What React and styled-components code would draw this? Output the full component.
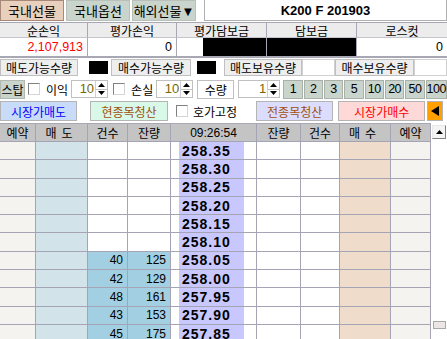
import React from "react";
import styled, { createGlobalStyle } from "styled-components";

const GlobalStyle = createGlobalStyle`
  body {
    margin: 0;
    background: #fff;
    font-family: "Liberation Sans", "Noto Sans CJK KR", sans-serif;
    font-size: 12px;
    color: #000;
    overflow: hidden;
  }
`;

const Page = styled.div`
  width: 447px;
  height: 339px;
  overflow: hidden;
  display: flex;
  flex-direction: column;
`;

const TopBar = styled.div`
  display: flex;
  gap: 2px;
  height: 21px;
  margin-bottom: 1px;
`;

const Tab = styled.div`
  width: 64px;
  box-sizing: border-box;
  display: flex;
  align-items: center;
  justify-content: center;
  font-size: 13px;
  background: ${(p) => (p.$active ? "#e8d0bc" : "#c8d4cc")};
  border: 1px solid ${(p) => (p.$active ? "#a88878" : "#b8c0b8")};
`;

const TitleBox = styled.div`
  flex: 1;
  margin-left: 6px;
  display: flex;
  align-items: center;
  justify-content: center;
  font-weight: bold;
  font-size: 13px;
  border: 1px solid #b0b0b0;
  border-top: none;
`;

const Summary = styled.div`
  display: grid;
  grid-template-columns: 88px 89px 90px 90px 1fr;
  grid-template-rows: 15px 18px;
  border-top: 1px solid #a8a8b4;
  border-bottom: 2px solid #a8a8b4;
`;

const SumHead = styled.div`
  background: #ececec;
  border-right: 1px solid #a8a8b4;
  border-bottom: 1px solid #c4c4cc;
  display: flex;
  align-items: center;
  justify-content: center;
  &:nth-child(5) {
    border-right: none;
  }
`;

const SumValue = styled.div`
  display: flex;
  align-items: center;
  justify-content: flex-end;
  padding-right: 4px;
  border-right: ${(p) => (p.$last ? "none" : "1px solid #a8a8b4")};
  color: ${(p) => (p.$red ? "#ff0000" : "#000")};
  font-size: 12.5px;
  background: ${(p) => (p.$dark ? "#000" : "#fff")};
`;

const Blackout = styled.div`
  align-self: stretch;
  width: 63px;
  margin-right: -4px;
  background: #000;
`;

const QtyRow = styled.div`
  display: grid;
  grid-template-columns: 78px 33px 80px 33px 78px 33px 79px 1fr;
  height: 19px;
  align-items: center;
`;

const QtyLabel = styled.div`
  height: 17px;
  box-sizing: border-box;
  display: flex;
  align-items: center;
  justify-content: center;
  background: #eeeeee;
  border: 1px solid #c0c0c0;
`;

const QtyBox = styled.div`
  height: 17px;
  box-sizing: border-box;
  background: #fff;
  border: 1px solid #d0d0d0;
`;

const BlackBox = styled.div`
  height: 13px;
  width: 19px;
  margin-left: ${(p) => p.$ml}px;
  background: #000;
`;

const Line = styled.div`
  display: flex;
  align-items: center;
  height: 20px;
  margin-top: 2px;
`;

const GreyBtn = styled.div`
  width: ${(p) => p.$w}px;
  height: 19px;
  box-sizing: border-box;
  display: flex;
  align-items: center;
  justify-content: center;
  font-size: 12px;
  white-space: nowrap;
  flex-shrink: 0;
  background: ${(p) => (p.$plain ? "#fff" : "#c8d4cc")};
  border: 1px solid ${(p) => (p.$plain ? "#c0c0c0" : "#b0b8b0")};
  margin-left: ${(p) => p.$ml || 0}px;
`;

const NumBtns = styled.div`
  flex: 1;
  display: flex;
  gap: 1px;
  margin-left: 3px;
`;

const NumBtn = styled.div`
  flex: 1;
  height: 19px;
  box-sizing: border-box;
  display: flex;
  align-items: center;
  justify-content: center;
  font-size: 12.5px;
  background: #c8d4cc;
  border: 1px solid #a8b0a8;
  letter-spacing: -0.5px;
`;

const Check = styled.span`
  display: block;
  width: 12px;
  height: 12px;
  box-sizing: border-box;
  background: #fff;
  border-top: 1px solid #808080;
  border-left: 1px solid #808080;
  border-right: 1px solid #d4d4d4;
  border-bottom: 1px solid #d4d4d4;
  margin-left: ${(p) => p.$ml || 0}px;
  flex-shrink: 0;
`;

const Text = styled.span`
  margin-left: ${(p) => p.$ml || 0}px;
  font-size: 12px;
  white-space: nowrap;
`;

const Spin = styled.div`
  display: flex;
  width: ${(p) => p.$w}px;
  height: 18px;
  box-sizing: border-box;
  margin-left: ${(p) => p.$ml || 0}px;
  border: 1px solid #c0c0c0;
  background: #fff;
  flex-shrink: 0;
`;

const SpinValue = styled.span`
  flex: 1;
  text-align: right;
  color: #7a6600;
  font-size: 13px;
  line-height: 16px;
  padding-right: 1px;
`;

const SpinArrows = styled.div`
  width: 11px;
  display: flex;
  flex-direction: column;
  border-left: 1px solid #d0d0d0;
`;

const SpinArrow = styled.div`
  flex: 1;
  display: flex;
  align-items: center;
  justify-content: center;
  & + & {
    border-top: 1px solid #c0c0c0;
  }
`;

const ActionBtn = styled.div`
  width: ${(p) => p.$w}px;
  height: 20px;
  box-sizing: border-box;
  margin-left: ${(p) => p.$ml || 0}px;
  display: flex;
  align-items: center;
  justify-content: center;
  font-size: 12px;
  background: ${(p) => p.$bg};
  color: ${(p) => p.$color};
  border: 1px solid #b4b4b4;
  flex-shrink: 0;
`;

const Board = styled.div`
  display: flex;
  margin-top: 2px;
  flex: 1;
  min-height: 0;
`;

const Table = styled.div`
  width: 431px;
  display: grid;
  grid-template-columns: 36px 52px 40px 43px 86px 44px 39px 51px 40px;
  grid-template-rows: 18px;
  grid-auto-rows: 18.3px;
  border-top: 1px solid #a8a8b4;
  align-content: start;
`;

const HeadCell = styled.div`
  box-sizing: border-box;
  background: #c4c4c4;
  border-right: 1px solid #a4a4b4;
  border-bottom: 1px solid #a4a4b4;
  display: flex;
  align-items: center;
  justify-content: center;
  letter-spacing: ${(p) => p.$ls || 0}px;
  font-size: 12px;
`;

const Cell = styled.div`
  box-sizing: border-box;
  background: ${(p) => p.$bg || "#fff"};
  border-right: 1px solid #a4a4b4;
  border-bottom: 1px solid #a4a4b4;
  display: flex;
  align-items: center;
  justify-content: flex-end;
  padding-right: 4px;
  font-size: 12px;
`;

const PriceCell = styled.div`
  box-sizing: border-box;
  border-right: 1px solid #a4a4b4;
  border-bottom: 1px solid #a4a4b4;
  padding: 0 12px 0 8px;
  display: flex;
`;

const Price = styled.div`
  flex: 1;
  background: #c8c8ff;
  display: flex;
  align-items: center;
  padding-left: 3px;
  font-weight: bold;
  font-size: 14px;
  letter-spacing: 1px;
`;

const Scrollbar = styled.div`
  flex: 1;
  display: flex;
  flex-direction: column;
  align-items: center;
  padding-top: 2px;
`;

const ScrollBtn = styled.div`
  width: 14px;
  height: 14px;
  box-sizing: border-box;
  background: #f4f4f4;
  border-top: 1px solid #e8e8e8;
  border-left: 1px solid #e8e8e8;
  border-right: 1px solid #808080;
  border-bottom: 1px solid #808080;
  display: flex;
  align-items: center;
  justify-content: center;
`;

const Thumb = styled.div`
  width: 13px;
  height: 8px;
  box-sizing: border-box;
  margin-top: auto;
  margin-bottom: 10px;
  background: #ece6e6;
  border: 1px solid #a8a8a8;
`;

const Tri = ({ dir = "up", w = 7, h = 4 }) => {
  const pts = {
    up: `0,${h} ${w / 2},0 ${w},${h}`,
    down: `0,0 ${w},0 ${w / 2},${h}`,
    left: `${w},0 ${w},${h} 0,${h / 2}`,
  }[dir];
  return (
    <svg width={w} height={h} viewBox={`0 0 ${w} ${h}`} style={{ display: "block" }}>
      <polygon points={pts} fill="#000" />
    </svg>
  );
};

const Spinner = ({ value, w, ml }) => (
  <Spin $w={w} $ml={ml}>
    <SpinValue>{value}</SpinValue>
    <SpinArrows>
      <SpinArrow>
        <Tri dir="up" />
      </SpinArrow>
      <SpinArrow>
        <Tri dir="down" />
      </SpinArrow>
    </SpinArrows>
  </Spin>
);

const COLORS = {
  resv: "#f5f3f0",
  sell: "#d2e4ea",
  sellFill: "#a2cfe2",
  buy: "#f0dccb",
};

const rows = [
  { price: "258.35" },
  { price: "258.30" },
  { price: "258.25" },
  { price: "258.20" },
  { price: "258.15" },
  { price: "258.10" },
  { price: "258.05", cnt: 40, qty: 125 },
  { price: "258.00", cnt: 42, qty: 129 },
  { price: "257.95", cnt: 48, qty: 161 },
  { price: "257.90", cnt: 43, qty: 153 },
  { price: "257.85", cnt: 45, qty: 175 },
];

const App = () => {
  return (
    <Page>
      <GlobalStyle />
      <TopBar>
        <Tab $active>국내선물</Tab>
        <Tab>국내옵션</Tab>
        <Tab>해외선물▼</Tab>
        <TitleBox>K200 F 201903</TitleBox>
      </TopBar>

      <Summary>
        <SumHead>순손익</SumHead>
        <SumHead>평가손익</SumHead>
        <SumHead>평가담보금</SumHead>
        <SumHead>담보금</SumHead>
        <SumHead>로스컷</SumHead>
        <SumValue $red>2,107,913</SumValue>
        <SumValue>0</SumValue>
        <SumValue>
          <Blackout />
        </SumValue>
        <SumValue $dark />
        <SumValue $last>0</SumValue>
      </Summary>

      <QtyRow>
        <QtyLabel>매도가능수량</QtyLabel>
        <BlackBox $ml={11} />
        <QtyLabel>매수가능수량</QtyLabel>
        <BlackBox $ml={6} />
        <QtyLabel>매도보유수량</QtyLabel>
        <QtyBox />
        <QtyLabel>매수보유수량</QtyLabel>
        <QtyBox />
      </QtyRow>

      <Line>
        <GreyBtn $w={25}>스탑</GreyBtn>
        <Check $ml={3} />
        <Text $ml={6}>이익</Text>
        <Spinner value="10" w={37} ml={3} />
        <Check $ml={5} />
        <Text $ml={6}>손실</Text>
        <Spinner value="10" w={37} ml={3} />
        <GreyBtn $w={37} $ml={4} $plain>
          수량
        </GreyBtn>
        <Spinner value="1" w={42} ml={4} />
        <NumBtns>
          {["1", "2", "3", "5", "10", "20", "50", "100"].map((n) => (
            <NumBtn key={n}>{n}</NumBtn>
          ))}
        </NumBtns>
      </Line>

      <Line>
        <ActionBtn $w={77} $bg="#c8dcfa" $color="#0000ff">
          시장가매도
        </ActionBtn>
        <ActionBtn $w={78} $ml={13} $bg="#d8f8e8" $color="#a05010">
          현종목청산
        </ActionBtn>
        <Check $ml={8} />
        <Text $ml={5}>호가고정</Text>
        <ActionBtn $w={77} $ml={19} $bg="#dcdcfc" $color="#a05010">
          전종목청산
        </ActionBtn>
        <ActionBtn $w={87} $ml={5} $bg="#ffd8d8" $color="#ff0000">
          시장가매수
        </ActionBtn>
        <ActionBtn $w={16} $ml={2} $bg="#ffa000" $color="#000">
          <Tri dir="left" w={8} h={10} />
        </ActionBtn>
      </Line>

      <Board>
        <Table>
          <HeadCell>예약</HeadCell>
          <HeadCell $ls={5}>매도</HeadCell>
          <HeadCell>건수</HeadCell>
          <HeadCell>잔량</HeadCell>
          <HeadCell>09:26:54</HeadCell>
          <HeadCell>잔량</HeadCell>
          <HeadCell>건수</HeadCell>
          <HeadCell $ls={5}>매수</HeadCell>
          <HeadCell>예약</HeadCell>
          {rows.map((r) => (
            <React.Fragment key={r.price}>
              <Cell $bg={COLORS.resv} />
              <Cell $bg={COLORS.sell} />
              <Cell $bg={r.cnt ? COLORS.sellFill : "#fff"}>{r.cnt}</Cell>
              <Cell $bg={r.qty ? COLORS.sellFill : "#fff"}>{r.qty}</Cell>
              <PriceCell>
                <Price>{r.price}</Price>
              </PriceCell>
              <Cell />
              <Cell />
              <Cell $bg={COLORS.buy} />
              <Cell $bg={COLORS.resv} />
            </React.Fragment>
          ))}
        </Table>
        <Scrollbar>
          <ScrollBtn>
            <Tri dir="up" w={7} h={4} />
          </ScrollBtn>
          <Thumb />
        </Scrollbar>
      </Board>
    </Page>
  );
};

export default App;
